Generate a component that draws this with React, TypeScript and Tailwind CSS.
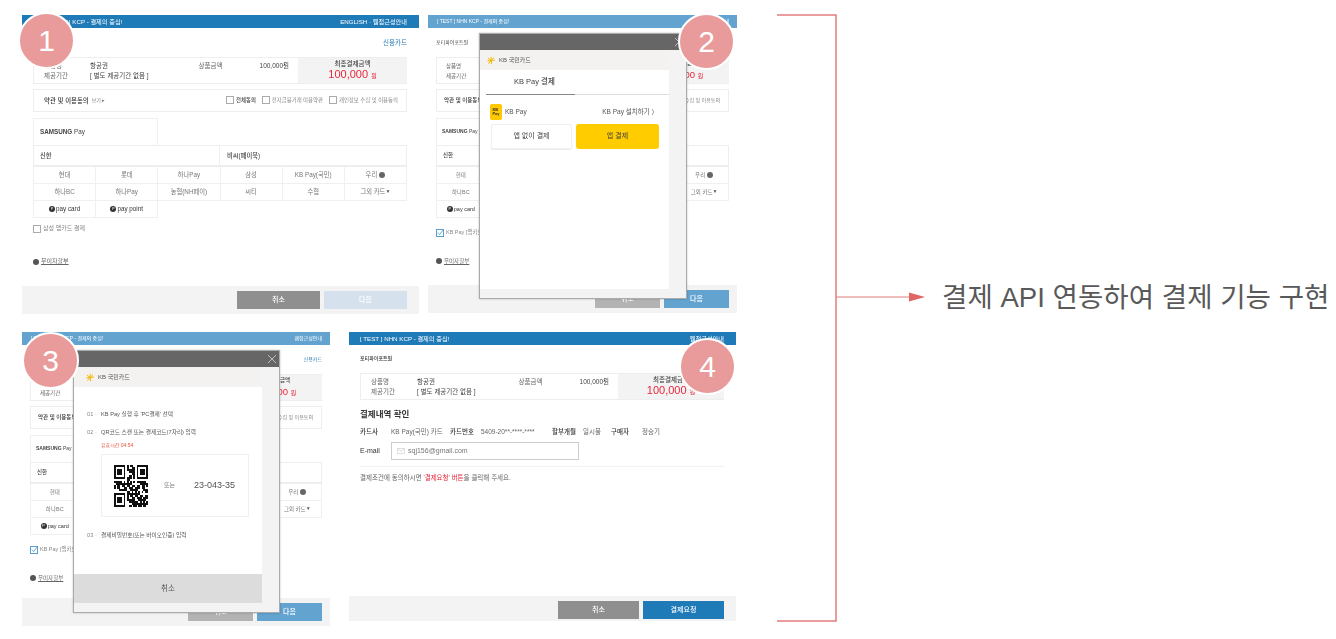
const cjk = "font-['Liberation_Sans','Noto_Sans_CJK_KR',sans-serif]";

function Header({ tone, right, narrow }: { tone: string; right: string; narrow?: boolean }) {
  return (
    <div className={`flex h-[13px] shrink-0 items-center justify-between text-white ${tone} ${narrow ? 'pl-[9px] pr-[8px] text-[5px]' : 'pl-[11px] pr-[12px] text-[6.2px]'}`}>
      <span>[ TEST ] NHN KCP - 결제의 중심!</span>
      <span>{right}</span>
    </div>
  );
}

function Summary({ narrow, amountBox }: { narrow?: boolean; amountBox: string }) {
  return (
    <div className={`flex h-[27px] shrink-0 border-y border-l border-[#eeeeee] text-[#666666] ${narrow ? 'text-[5.5px]' : 'text-[6.5px]'}`}>
      <div className={`grid min-w-0 flex-1 grid-cols-[46px_1fr_61px_auto] content-center gap-y-[2px] whitespace-nowrap pr-[9px] leading-[8px] ${narrow ? 'pl-[9px]' : 'pl-[10px]'}`}>
        <span>상품명</span>
        <span className="text-[#444444]">항공권</span>
        <span>상품금액</span>
        <span className="text-[#444444]">100,000원</span>
        <span>제공기간</span>
        <span className="text-[#444444]">[ 별도 제공기간 없음 ]</span>
      </div>
      <div className={`flex shrink-0 flex-col items-center justify-center bg-[#f3f3f3] ${amountBox}`}>
        <span className={`font-medium leading-[9px] text-[#444444] ${narrow ? 'text-[5.5px]' : 'text-[6.5px]'}`}>최종결제금액</span>
        <span className={`leading-[13px] text-[#e8273c] ${narrow ? 'text-[9.5px]' : 'text-[11px]'}`}>
          100,000 <span className="text-[6px]">원</span>
        </span>
      </div>
    </div>
  );
}

function Check({ on }: { on?: boolean }) {
  return (
    <span className={`relative inline-block h-[8px] w-[8px] shrink-0 border bg-white ${on ? 'border-[#5a9fd0]' : 'border-[#aaaaaa]'}`}>
      {on && (
        <svg viewBox="0 0 8 8" className="absolute -top-[1px] left-0 h-[7px] w-[7px]">
          <path d="M1 4l2 2.500L7 1" fill="none" stroke="#5a9fd0" strokeWidth="1" />
        </svg>
      )}
    </span>
  );
}

function Terms({ narrow }: { narrow?: boolean }) {
  return (
    <div className={`mt-[5px] flex h-[23px] shrink-0 items-center justify-between overflow-hidden whitespace-nowrap border border-[#eeeeee] pr-[8px] text-[#555555] ${narrow ? 'pl-[7px]' : 'pl-[10px]'}`}>
      <span className={`flex items-center gap-[3px] font-medium text-[#333333] ${narrow ? 'text-[5.5px]' : 'text-[6.4px]'}`}>
        약관 및 이용동의 <span className="text-[5px] font-normal text-[#777777]">보기 ▸</span>
      </span>
      <span className={`flex items-center gap-[6px] text-[#888888] ${narrow ? 'text-[5px]' : 'text-[5.4px]'}`}>
        <span className="flex items-center gap-[2px] font-medium text-[#444444]"><Check />전체동의</span>
        <span className="flex items-center gap-[2px]"><Check />전자금융거래 이용약관</span>
        <span className="flex items-center gap-[2px]"><Check />개인정보 수집 및 이용동의</span>
      </span>
    </div>
  );
}

function PayLogo({ label }: { label: string }) {
  return (
    <span className="flex items-center gap-[1px] font-medium text-[#333333]">
      <span className="flex h-[6px] w-[6px] items-center justify-center rounded-full bg-[#333333] text-[4px] leading-none text-white">P</span>
      {label}
    </span>
  );
}

function CardGrid({ narrow }: { narrow?: boolean }) {
  const cell = `flex h-[17px] items-center justify-center border-b border-r border-[#f0f0f0] text-[#777777] whitespace-nowrap ${narrow ? 'text-[5.500px]' : 'text-[6.300px]'}`;
  const row1 = ['현대', '롯데', '하나Pay', '삼성', 'KB Pay(국민)'];
  const row2 = ['하나BC', '하나Pay', '농협(NH페이)', '씨티', '수협'];
  return (
    <div className="shrink-0">
      <div className={`flex h-[27px] w-1/3 items-center border border-b-0 border-[#f0f0f0] font-bold text-[#444444] ${narrow ? 'pl-[5px] text-[5px]' : 'pl-[6px] text-[6.300px]'}`}>
        SAMSUNG&nbsp;<span className="font-medium">Pay</span>
      </div>
      <div className={`grid h-[22px] grid-cols-2 border border-b-2 border-[#eeeeee] font-medium text-[#444444] ${narrow ? 'text-[5.500px]' : 'text-[6.300px]'}`}>
        <span className="flex items-center border-r border-[#eeeeee] pl-[6px]">신한</span>
        <span className="flex items-center pl-[7px]">비씨(페이북)</span>
      </div>
      <div className="grid grid-cols-6 border-l border-[#f0f0f0]">
        {row1.map((name, i) => (
          <span key={i} className={cell}>{name}</span>
        ))}
        <span className={`${cell} gap-[2px]`}>
          우리
          <span className="h-[6px] w-[6px] rounded-full bg-[#666666]" />
        </span>
        {row2.map((name, i) => (
          <span key={i} className={cell}>{name}</span>
        ))}
        <span className={`${cell} justify-between px-[3px]`}>
          그외 카드
          <span className="text-[5px] text-[#555555]">▼</span>
        </span>
        <span className={cell}><PayLogo label="pay card" /></span>
        <span className={cell}><PayLogo label="pay point" /></span>
      </div>
    </div>
  );
}

function Buttons({ bar, size, cancel, next, label }: { bar: string; size: string; cancel: string; next: string; label: string }) {
  return (
    <div className={`mt-auto flex shrink-0 justify-end gap-[4px] bg-[#f3f3f3] ${bar}`}>
      <span className={`flex h-[18px] items-center justify-center text-[7px] font-medium text-white ${size} ${cancel}`}>취소</span>
      <span className={`flex h-[18px] items-center justify-center text-[7px] font-medium text-white ${size} ${next}`}>{label}</span>
    </div>
  );
}

function CheckoutPage({ narrow }: { narrow?: boolean }) {
  return (
    <div className="flex h-full flex-col">
      <Header narrow={narrow} tone={narrow ? 'bg-[#62a3d0]' : 'bg-[#1f7ab8]'} right={narrow ? '웹접근성안내' : 'ENGLISH · 웹접근성안내'} />
      <div className={`flex min-h-0 flex-1 flex-col ${narrow ? 'px-[8px]' : 'pl-[11px] pr-[12px]'}`}>
        <div className={`flex h-[29px] shrink-0 items-center justify-between ${narrow ? 'text-[5px]' : 'text-[6.500px]'}`}>
          <span className="text-[#444444]">{narrow ? '포티파이포트원' : ''}</span>
          <span className="text-[#2a7ab5]">신용카드</span>
        </div>
        <Summary narrow={narrow} amountBox={narrow ? 'w-[94px]' : 'w-[109px]'} />
        <Terms narrow={narrow} />
        <div className="h-[6px] shrink-0" />
        <CardGrid narrow={narrow} />
        <div className={`flex h-[11px] shrink-0 items-center gap-[2px] text-[#888888] ${narrow ? 'mt-[9px] text-[5.500px]' : 'mt-[5px] text-[6px]'}`}>
          <Check on={narrow} />
          {narrow ? 'KB Pay [앱카드] 결제' : '삼성 앱카드 결제'}
        </div>
        <div className={`flex items-center gap-[2px] text-[#666666] ${narrow ? 'mt-[19px] text-[5.500px]' : 'mt-[23px] text-[6px]'}`}>
          <span className="h-[6px] w-[6px] rounded-full bg-[#555555]" />
          <span className="underline">무이자할부</span>
        </div>
      </div>
      <Buttons
        bar={narrow ? 'h-[28px] items-center pr-[8px]' : 'h-[28px] items-center pr-[12px]'}
        size={narrow ? 'w-[65px]' : 'w-[83px]'}
        cancel={narrow ? 'bg-[#b3b3b3]' : 'bg-[#8f8f8f]'}
        next={narrow ? 'bg-[#62a3d0]' : 'bg-[#d5e1ec]'}
        label="다음"
      />
    </div>
  );
}

function KbLogo() {
  return (
    <span className="flex items-center gap-[2px] text-[6px] text-[#555555]">
      <svg viewBox="0 0 12 10" className="h-[9px] w-[10px]">
        <g stroke="#f5b800" strokeWidth="1.200" strokeLinecap="round">
          <path d="M5 5L5 1M5 5L1.500 2.500M5 5L1 5.500M5 5L2 8.500M5 5L5.500 9M5 5L8 2M5 5L9 4.500" />
        </g>
      </svg>
      KB 국민카드
    </span>
  );
}

function ModalFrame({ children, footer, position, logoPad }: { children: React.ReactNode; footer?: React.ReactNode; position: string; logoPad: string }) {
  return (
    <div className={`absolute flex flex-col border border-[#aaaaaa] bg-[#f3f3f3] shadow-[0_0_2px_rgba(0,0,0,0.25)] ${position}`}>
      <div className="flex h-[16px] shrink-0 items-center justify-end bg-[#666666] pr-[2px]">
        <svg viewBox="0 0 10 10" className="h-[10px] w-[10px]">
          <path d="M1 1l8 8M9 1l-8 8" stroke="#e5e5e5" strokeWidth="0.700" />
        </svg>
      </div>
      <div className="flex min-h-0 flex-1 flex-col pr-[17px]">
        <div className={`flex h-[20px] shrink-0 items-center bg-[#f3f2f0] pt-[1px] ${logoPad}`}>
          <KbLogo />
        </div>
        {children}
        {footer}
      </div>
    </div>
  );
}

function PayChoiceModal() {
  return (
    <ModalFrame position="left-[51px] top-[18px] h-[266px] w-[208px]" logoPad="pl-[7px]">
      <div className="mb-[9px] flex min-h-0 flex-1 flex-col bg-white pl-[6px]">
        <div className="flex h-[25px] shrink-0 items-center border-b border-[#dddddd] pl-[28px] text-[7.500px] font-medium text-[#444444]">
          KB Pay 결제
        </div>
        <div className="-mt-px h-px w-[89px] bg-[#888888]" />
        <div className="mt-[9px] flex items-center justify-between pl-[4px] pr-[11px] text-[6.500px] text-[#555555]">
          <span className="flex items-center gap-[3px]">
            <span className="flex h-[16px] w-[12px] flex-col items-center justify-center rounded-[2px] bg-[#ffc800] text-[4px] font-bold leading-[4px] text-[#333333]">
              KB<br />Pay
            </span>
            KB Pay
          </span>
          <span>KB Pay 설치하기 〉</span>
        </div>
        <div className="mt-[4px] flex gap-[4px] pl-[5px] text-[7px] text-[#444444]">
          <span className="flex h-[25px] w-[81px] items-center justify-center rounded-[2px] border border-[#f0f0f0] shadow-[0_1px_1px_rgba(0,0,0,0.08)]">앱 없이 결제</span>
          <span className="flex h-[25px] w-[83px] items-center justify-center rounded-[3px] bg-[#ffcc00]">앱 결제</span>
        </div>
      </div>
    </ModalFrame>
  );
}

// 대충 QR처럼 보이는 패턴
function QrCode() {
  const size = 21;
  const inFinder = (x: number, y: number, ox: number, oy: number) => x >= ox && x < ox + 7 && y >= oy && y < oy + 7;
  const cells: React.ReactNode[] = [];
  for (let y = 0; y < size; y++) {
    for (let x = 0; x < size; x++) {
      let on = false;
      const finders: [number, number][] = [[0, 0], [14, 0], [0, 14]];
      const finder = finders.find(([ox, oy]) => inFinder(x, y, ox, oy));
      if (finder) {
        const dx = x - finder[0];
        const dy = y - finder[1];
        on = dx === 0 || dx === 6 || dy === 0 || dy === 6 || (dx >= 2 && dx <= 4 && dy >= 2 && dy <= 4);
      } else if (!((x < 8 && y < 8) || (x > 12 && y < 8) || (x < 8 && y > 12))) {
        on = (x * 7 + y * 11 + ((x * y) % 5)) % 3 !== 0;
      }
      if (on) cells.push(<rect key={`${x}-${y}`} x={x} y={y} width="1" height="1" />);
    }
  }
  return (
    <svg viewBox="0 0 21 21" preserveAspectRatio="none" className="h-[42px] w-[34px] shrink-0" fill="#111111" shapeRendering="crispEdges">
      {cells}
    </svg>
  );
}

function QrModal() {
  const num = 'inline-block w-[14px] text-[#888888]';
  return (
    <ModalFrame
      position="left-[51px] top-[18px] h-[263px] w-[207px]"
      logoPad="pl-[12px]"
      footer={
        <div className="mb-[9px] flex h-[29px] shrink-0 items-center justify-center bg-[#dcdcdc] text-[7.500px] text-[#555555]">취소</div>
      }
    >
      <div className="flex min-h-0 flex-1 flex-col bg-white pl-[13px] pr-[13px] pt-[22px] text-[5.700px] text-[#555555]">
        <p className="leading-[10px]"><span className={num}>01 ·</span>KB Pay 실행 후 'PC결제' 선택</p>
        <p className="mt-[8px] leading-[10px]"><span className={num}>02 ·</span>QR코드 스캔 또는 결제코드(7자리) 입력</p>
        <p className="mt-[4px] pl-[14px] text-[5px] leading-[8px] text-[#e8503c]">유효시간 04:54</p>
        <div className="ml-[14px] mt-[5px] flex h-[63px] w-[148px] items-center border border-[#f0f0f0] pl-[12px]">
          <QrCode />
          <span className="ml-[16px] text-[6px] text-[#777777]">또는</span>
          <span className="ml-[19px] text-[9px] text-[#555555]">23-043-35</span>
        </div>
        <p className="mt-[13px] leading-[10px]"><span className={num}>03 ·</span>결제비밀번호(또는 바이오인증) 입력</p>
      </div>
    </ModalFrame>
  );
}

function ConfirmPage() {
  const label = 'font-medium text-[#333333]';
  return (
    <div className="flex h-full flex-col">
      <Header tone="bg-[#1f7ab8]" right="웹접근성안내" />
      <div className="flex min-h-0 flex-1 flex-col pl-[11px] pr-[12px]">
        <div className="flex h-[28px] shrink-0 items-center text-[5px] font-medium text-[#333333]">포티파이포트원</div>
        <Summary amountBox="w-[106px]" />
        <h2 className="mt-[8px] text-[8.500px] font-bold leading-[12px] text-[#333333]">결제내역 확인</h2>
        <div className="mt-[7px] flex h-[10px] items-center whitespace-nowrap text-[6.500px] text-[#666666]">
          <span className={`w-[31px] ${label}`}>카드사</span>
          <span className="w-[59px]">KB Pay(국민) 카드</span>
          <span className={`w-[31px] ${label}`}>카드번호</span>
          <span className="w-[71px]">5409-20**-****-****</span>
          <span className={`w-[31px] ${label}`}>할부개월</span>
          <span className="w-[28px]">일시불</span>
          <span className={`w-[31px] ${label}`}>구매자</span>
          <span>정승기</span>
        </div>
        <div className="mt-[5px] flex items-center text-[7px]">
          <span className={`w-[31px] ${label}`}>E-mail</span>
          <span className="flex h-[18px] w-[188px] items-center gap-[3px] border border-[#cccccc] pl-[5px] text-[#777777]">
            <svg viewBox="0 0 10 8" className="h-[6px] w-[8px]">
              <path d="M.5.5h9v7h-9zM.5.5L5 4.500 9.500.5" fill="none" stroke="#bbbbbb" strokeWidth="0.700" />
            </svg>
            sqj156@gmail.com
          </span>
        </div>
        <div className="mt-[6px] border-t border-[#f2f2f2] pt-[6px] text-[6.500px] leading-[9px] text-[#666666]">
          결제조건에 동의하시면 <span className="text-[#e8273c]">'결제요청' 버튼</span>을 클릭해 주세요.
        </div>
      </div>
      <Buttons bar="h-[25px] items-end pb-[2px] pr-[12px]" size="w-[81px]" cancel="bg-[#8f8f8f]" next="bg-[#1f7ab8]" label="결제요청" />
    </div>
  );
}

function Badge({ n, position }: { n: number; position: string }) {
  return (
    <div className={`absolute flex h-[57px] w-[57px] items-center justify-center rounded-full border-2 border-white bg-[#e99a9a] text-[30px] text-white ${position}`}>
      {n}
    </div>
  );
}

function Shot({ position, children }: { position: string; children: React.ReactNode }) {
  return <div className={`absolute overflow-hidden bg-white blur-[0.5px] ${position}`}>{children}</div>;
}

export default function App() {
  return (
    <div className={`relative h-[639px] w-[1336px] overflow-hidden bg-white ${cjk}`}>
      <Shot position="left-[22px] top-[15px] h-[299px] w-[397px]">
        <CheckoutPage />
      </Shot>
      <Shot position="left-[428px] top-[15px] h-[298px] w-[309px]">
        <CheckoutPage narrow />
        <PayChoiceModal />
      </Shot>
      <Shot position="left-[22px] top-[332px] h-[294px] w-[308px]">
        <CheckoutPage narrow />
        <QrModal />
      </Shot>
      <Shot position="left-[349px] top-[332px] h-[289px] w-[387px]">
        <ConfirmPage />
      </Shot>

      <Badge n={1} position="left-[18px] top-[12px]" />
      <Badge n={2} position="left-[678px] top-[13px]" />
      <Badge n={3} position="left-[22px] top-[332px]" />
      <Badge n={4} position="left-[679px] top-[338px]" />

      <svg className="absolute left-[770px] top-[8px] h-[620px] w-[165px]" viewBox="0 0 165 620" fill="none">
        <path d="M7 7H66V613H7" stroke="#e27d7d" strokeWidth="1.500" />
        <path d="M66 289H140" stroke="#e27d7d" strokeWidth="1.200" />
        <path d="M139 284.500L155 289L139 293.500Z" fill="#e06666" />
      </svg>
      <div className="absolute left-[942px] top-[279px] whitespace-nowrap text-[27.600px] leading-[38px] text-[#595959]">
        결제 API 연동하여 결제 기능 구현
      </div>
    </div>
  );
}
